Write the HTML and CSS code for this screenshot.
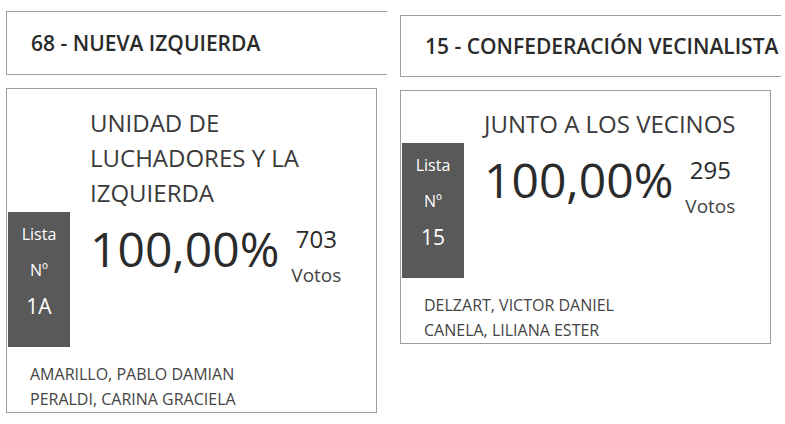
FILE: index.html
```html
<!DOCTYPE html>
<html lang="es">
<head>
  <meta charset="UTF-8" />
  <title>Resultados por lista</title>
  <link rel="stylesheet" href="styles.css">
</head>
<body>
  <div class="fila">
    <div class="columna">
      <div class="partido">68 - NUEVA IZQUIERDA</div>
      <div class="tarjeta">
        <div class="lista-nombre">UNIDAD DE LUCHADORES Y LA IZQUIERDA</div>
        <div class="resultado">
          <div class="lista-num">Lista<br>Nº<br><span>1A</span></div>
          <div class="porcentaje">100,00%</div>
          <div class="votos"><span>703</span>Votos</div>
        </div>
        <div class="candidatos">
          AMARILLO, PABLO DAMIAN<br>
          PERALDI, CARINA GRACIELA
        </div>
      </div>
    </div>

    <div class="columna columna-der">
      <div class="partido">15 - CONFEDERACIÓN VECINALISTA</div>
      <div class="tarjeta">
        <div class="lista-nombre">JUNTO A LOS VECINOS</div>
        <div class="resultado">
          <div class="lista-num">Lista<br>Nº<br><span>15</span></div>
          <div class="porcentaje">100,00%</div>
          <div class="votos"><span>295</span>Votos</div>
        </div>
        <div class="candidatos">
          DELZART, VICTOR DANIEL<br>
          CANELA, LILIANA ESTER
        </div>
      </div>
    </div>
  </div>
</body>
</html>
```

FILE: styles.css
```css
* {
  box-sizing: border-box;
  margin: 0;
  padding: 0;
}

body {
  font-family: 'Open Sans', sans-serif;
  background-color: #ffffff;
  color: #333;
  padding: 11px 0 0 6px;
}

.fila {
  display: flex;
  gap: 13px;
}

.columna {
  width: 381px;
  overflow: hidden;
  flex-shrink: 0;
}

.columna-der {
  padding-top: 4px;
}

/* Cabecera del partido */
.partido {
  width: 400px;
  height: 64px;
  border: 1px solid #9e9e9e;
  padding: 0 0 0 24px;
  display: flex;
  align-items: center;
  font-size: 21px;
  font-weight: 600;
  color: #2a2a2a;
}

.columna-der .partido {
  height: 62px;
}

.tarjeta {
  width: 371px;
  margin-top: 13px;
  border: 1px solid #9e9e9e;
  padding: 16px 0 0 1px;
}

.columna-der .tarjeta {
  padding-top: 15px;
}

.lista-nombre {
  margin-left: 82px;
  width: 265px;
  font-size: 24px;
  font-weight: 400;
  line-height: 35px;
  color: #3a3a3a;
}

.resultado {
  display: flex;
  align-items: flex-start;
  margin-top: 2px;
}

.lista-num {
  width: 62px;
  height: 135px;
  background-color: #595959;
  color: #fff;
  text-align: center;
  font-size: 16px;
  line-height: 36px;
  padding-top: 4px;
}

.lista-num span {
  font-size: 21px;
}

.porcentaje {
  margin: 9px 0 0 20px;
  font-size: 48px;
  line-height: 55px;
  color: #2b2b2b;
}

.votos {
  margin: 9px 0 0 12px;
  text-align: center;
  font-size: 19px;
  line-height: 36px;
  color: #444;
}

.votos span {
  display: block;
  font-size: 24px;
  color: #2b2b2b;
}

.candidatos {
  padding: 15px 0 0 22px;
  font-size: 16px;
  line-height: 25px;
  color: #444;
}
```
